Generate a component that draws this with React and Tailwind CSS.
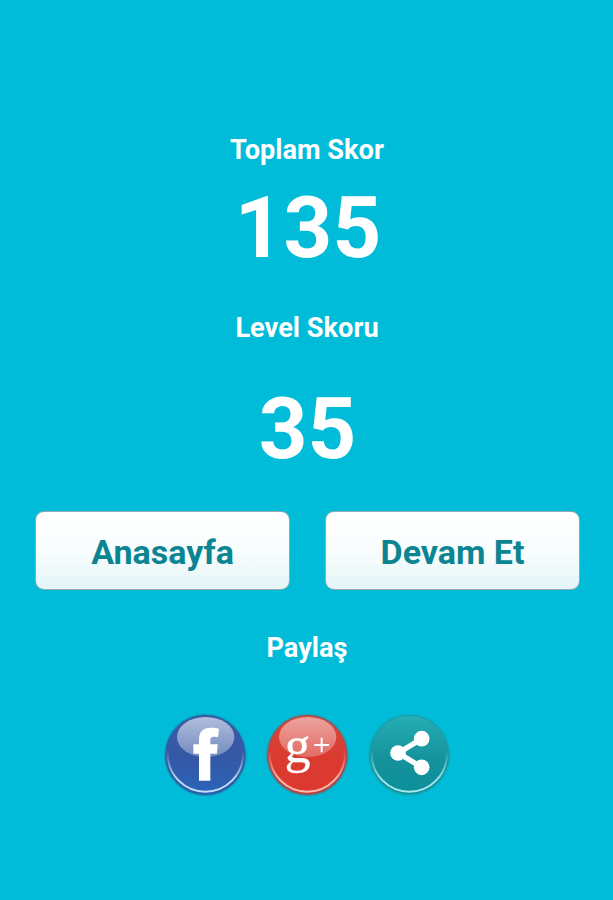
import React from 'react';

const GlossyBadge = ({ id, label, top, middle, bottom, rim, edge, gloss, children }) => (
    <button aria-label={label} className="h-[84px] w-[84px] cursor-pointer">
        <svg viewBox="23 25 252 252" className="block h-full w-full">
            <defs>
                <linearGradient id={`${id}-body`} x1="0" y1="0" x2="0" y2="1">
                    <stop offset="0" stopColor={top} />
                    <stop offset="0.55" stopColor={middle} />
                    <stop offset="1" stopColor={bottom} />
                </linearGradient>
                <linearGradient id={`${id}-gloss`} x1="0" y1="0" x2="0" y2="1">
                    <stop offset="0" stopColor="#fff" stopOpacity={gloss} />
                    <stop offset="1" stopColor="#fff" stopOpacity={gloss * 0.5} />
                </linearGradient>
                <linearGradient id={`${id}-rim`} x1="0" y1="0" x2="0" y2="1">
                    <stop offset="0.45" stopColor={rim} stopOpacity="0" />
                    <stop offset="0.85" stopColor={rim} stopOpacity="1" />
                </linearGradient>
            </defs>
            <circle cx="150" cy="151" r="124" fill={edge} opacity="0.35" />
            <circle cx="150" cy="151" r="120" fill={edge} />
            <circle cx="150" cy="150" r="117" fill={`url(#${id}-body)`} />
            <circle cx="150" cy="148" r="113" fill="none" stroke={`url(#${id}-rim)`} strokeWidth="6" />
            {gloss > 0 && <ellipse cx="151" cy="97" rx="86" ry="60" fill={`url(#${id}-gloss)`} />}
            {children}
        </svg>
    </button>
);

const MenuButton = ({ children }) => (
    <button className="flex h-[79px] w-[255px] cursor-pointer items-center justify-center rounded-[9px] border-[1.5px] border-[#93a9ad] bg-linear-to-b from-white via-[#f9fdfe] to-[#e4f5f7] pt-[3px] text-[34px] font-bold leading-none text-[#0b8591]">
        {children}
    </button>
);

const App = () => {
    return (
        <div className="flex h-[900px] w-full flex-col items-center bg-[#00bcd9] pt-[136px] font-['Roboto',sans-serif] font-bold text-white">
            <h2 className="pl-px text-[27.2px] leading-7">Toplam Skor</h2>
            <div className="mt-[21px] pl-[3px] text-[85px] leading-[86px]">135</div>
            <h2 className="mt-[43px] pl-px text-[27.2px] leading-7">Level Skoru</h2>
            <div className="mt-[44px] pl-[2px] text-[85px] leading-[86px]">35</div>

            <div className="mt-[39px] flex gap-[35px] pl-[2px]">
                <MenuButton>Anasayfa</MenuButton>
                <MenuButton>Devam Et</MenuButton>
            </div>

            <h2 className="mt-[44px] pl-px text-[27.2px] leading-7">Paylaş</h2>

            <div className="mt-[51px] flex gap-[18px]">
                <GlossyBadge id="facebook" label="Facebook" top="#3c5ba4" middle="#3558a6" bottom="#2a64b8" rim="#c5dcf5" edge="#2b5a9b" gloss={0.6}>
                    <path
                        fill="#fff"
                        d="M131 228V147H114V119H131V105C131 81 143 69 166 69C177 69 185 70 191 72L188 98C183 96 179 96 175 96C168 96 165 99 165 106V119H187L185 147H165V228Z"
                    />
                </GlossyBadge>
                <GlossyBadge id="google" label="Google Plus" top="#d7473c" middle="#da3a30" bottom="#dd392e" rim="#f9bdb6" edge="#8e5358" gloss={0.5}>
                    <text x="82" y="172" fill="#fff" stroke="#fff" strokeWidth="1" fontFamily="Liberation Serif, serif" fontSize="154" fontWeight="400">g</text>
                    <path d="M193 99V143M171 121H215" stroke="#fff" strokeWidth="6" fill="none" />
                </GlossyBadge>
                <GlossyBadge id="share" label="Share" top="#27adb4" middle="#15939d" bottom="#0c8e99" rim="#a4e9ee" edge="#179ba8" gloss={0}>
                    <path d="M187 102L117 145L187 188" fill="none" stroke="#fff" strokeWidth="16" />
                    <circle cx="187" cy="102" r="23.5" fill="#fff" />
                    <circle cx="116" cy="145" r="23.5" fill="#fff" />
                    <circle cx="187" cy="188" r="23.5" fill="#fff" />
                </GlossyBadge>
            </div>
        </div>
    );
};

export default App;
